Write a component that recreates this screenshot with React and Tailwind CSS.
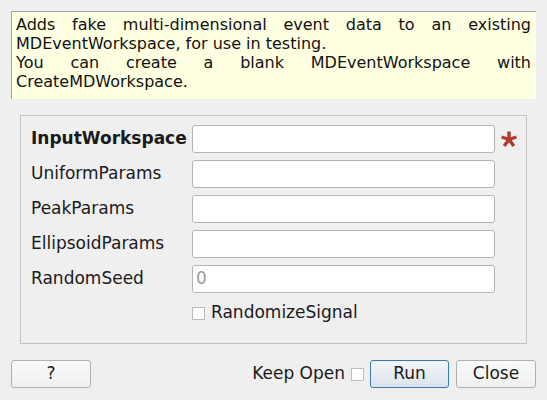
import React from 'react';

// ─── Form rows ────────────────────────────────────────────────────────────────
const FIELDS = [
    { name: 'InputWorkspace', bold: true, required: true },
    { name: 'UniformParams' },
    { name: 'PeakParams' },
    { name: 'EllipsoidParams' },
    { name: 'RandomSeed', placeholder: '0' },
];

const font = { fontFamily: '"DejaVu Sans", "Noto Sans", sans-serif' };

function Field({ field }) {
    return (
        <div className="flex items-center h-[28px]">
            <span className={`w-[161px] text-[17px] text-[#1a1a1a] ${field.bold ? 'font-bold' : ''}`}>{field.name}</span>
            <div className="w-[303px] h-[28px] bg-white border border-[#b4b4b4] rounded-[3px] flex items-center px-[3px] text-[17px] text-[#9a9a9a]">
                {field.placeholder}
            </div>
            {field.required && (
                <span className="ml-[6px] w-[16px] flex justify-center">
                    <svg width="16" height="16" viewBox="0 0 16 16">
                        <g stroke="#b23a2c" strokeWidth="3.4" strokeLinecap="butt">
                            <line x1="8" y1="8.5" x2="8" y2="0.5" />
                            <line x1="8" y1="8.5" x2="15.4" y2="6" />
                            <line x1="8" y1="8.5" x2="12.8" y2="15" />
                            <line x1="8" y1="8.5" x2="3.2" y2="15" />
                            <line x1="8" y1="8.5" x2="0.6" y2="6" />
                        </g>
                    </svg>
                </span>
            )}
        </div>
    );
}

function Button({ children, primary }) {
    return (
        <button className={`h-[28px] rounded-[3px] text-[17px] text-[#1a1a1a] border ${primary
            ? 'w-[79px] border-[#3b78b0] bg-gradient-to-b from-[#f3f6f9] to-[#dbe3ec]'
            : 'w-[80px] border-[#b0b0b0] bg-gradient-to-b from-[#fafafa] to-[#f0f0f0]'}`}>
            {children}
        </button>
    );
}

export default function App() {
    return (
        <div className="w-[547px] h-[400px] bg-[#efefef] px-[11px] pt-[11px]" style={font}>
            {/* Description */}
            <div className="h-[88px] bg-[#ffffe1] border-t border-l border-[#a0a0a0] pl-[4px] pr-[5px] pt-[3px] text-[16px] leading-[19px] text-[#111]">
                <div className="text-justify [text-align-last:justify]">Adds fake multi-dimensional event data to an existing</div>
                <div>MDEventWorkspace, for use in testing.</div>
                <div className="text-justify [text-align-last:justify]">You can create a blank MDEventWorkspace with</div>
                <div>CreateMDWorkspace.</div>
            </div>

            {/* Properties */}
            <div className="mx-[9px] mt-[16px] h-[229px] border border-[#c2c2c2] pl-[10px] pt-[9px]">
                <div className="flex flex-col gap-[7px]">
                    {FIELDS.map(f => <Field key={f.name} field={f} />)}
                </div>
                <div className="flex items-center ml-[161px] mt-[13px] h-[14px]">
                    <span className="w-[13px] h-[13px] bg-white border border-[#bdbdbd]" />
                    <span className="ml-[6px] text-[17px] text-[#1a1a1a]">RandomizeSignal</span>
                </div>
            </div>

            {/* Buttons */}
            <div className="flex items-center mt-[16px]">
                <Button>?</Button>
                <span className="ml-auto text-[17px] text-[#1a1a1a]">Keep Open</span>
                <span className="ml-[6px] w-[13px] h-[13px] bg-white border border-[#bdbdbd]" />
                <span className="ml-[6px]"><Button primary>Run</Button></span>
                <span className="ml-[7px]"><Button>Close</Button></span>
            </div>
        </div>
    );
}
